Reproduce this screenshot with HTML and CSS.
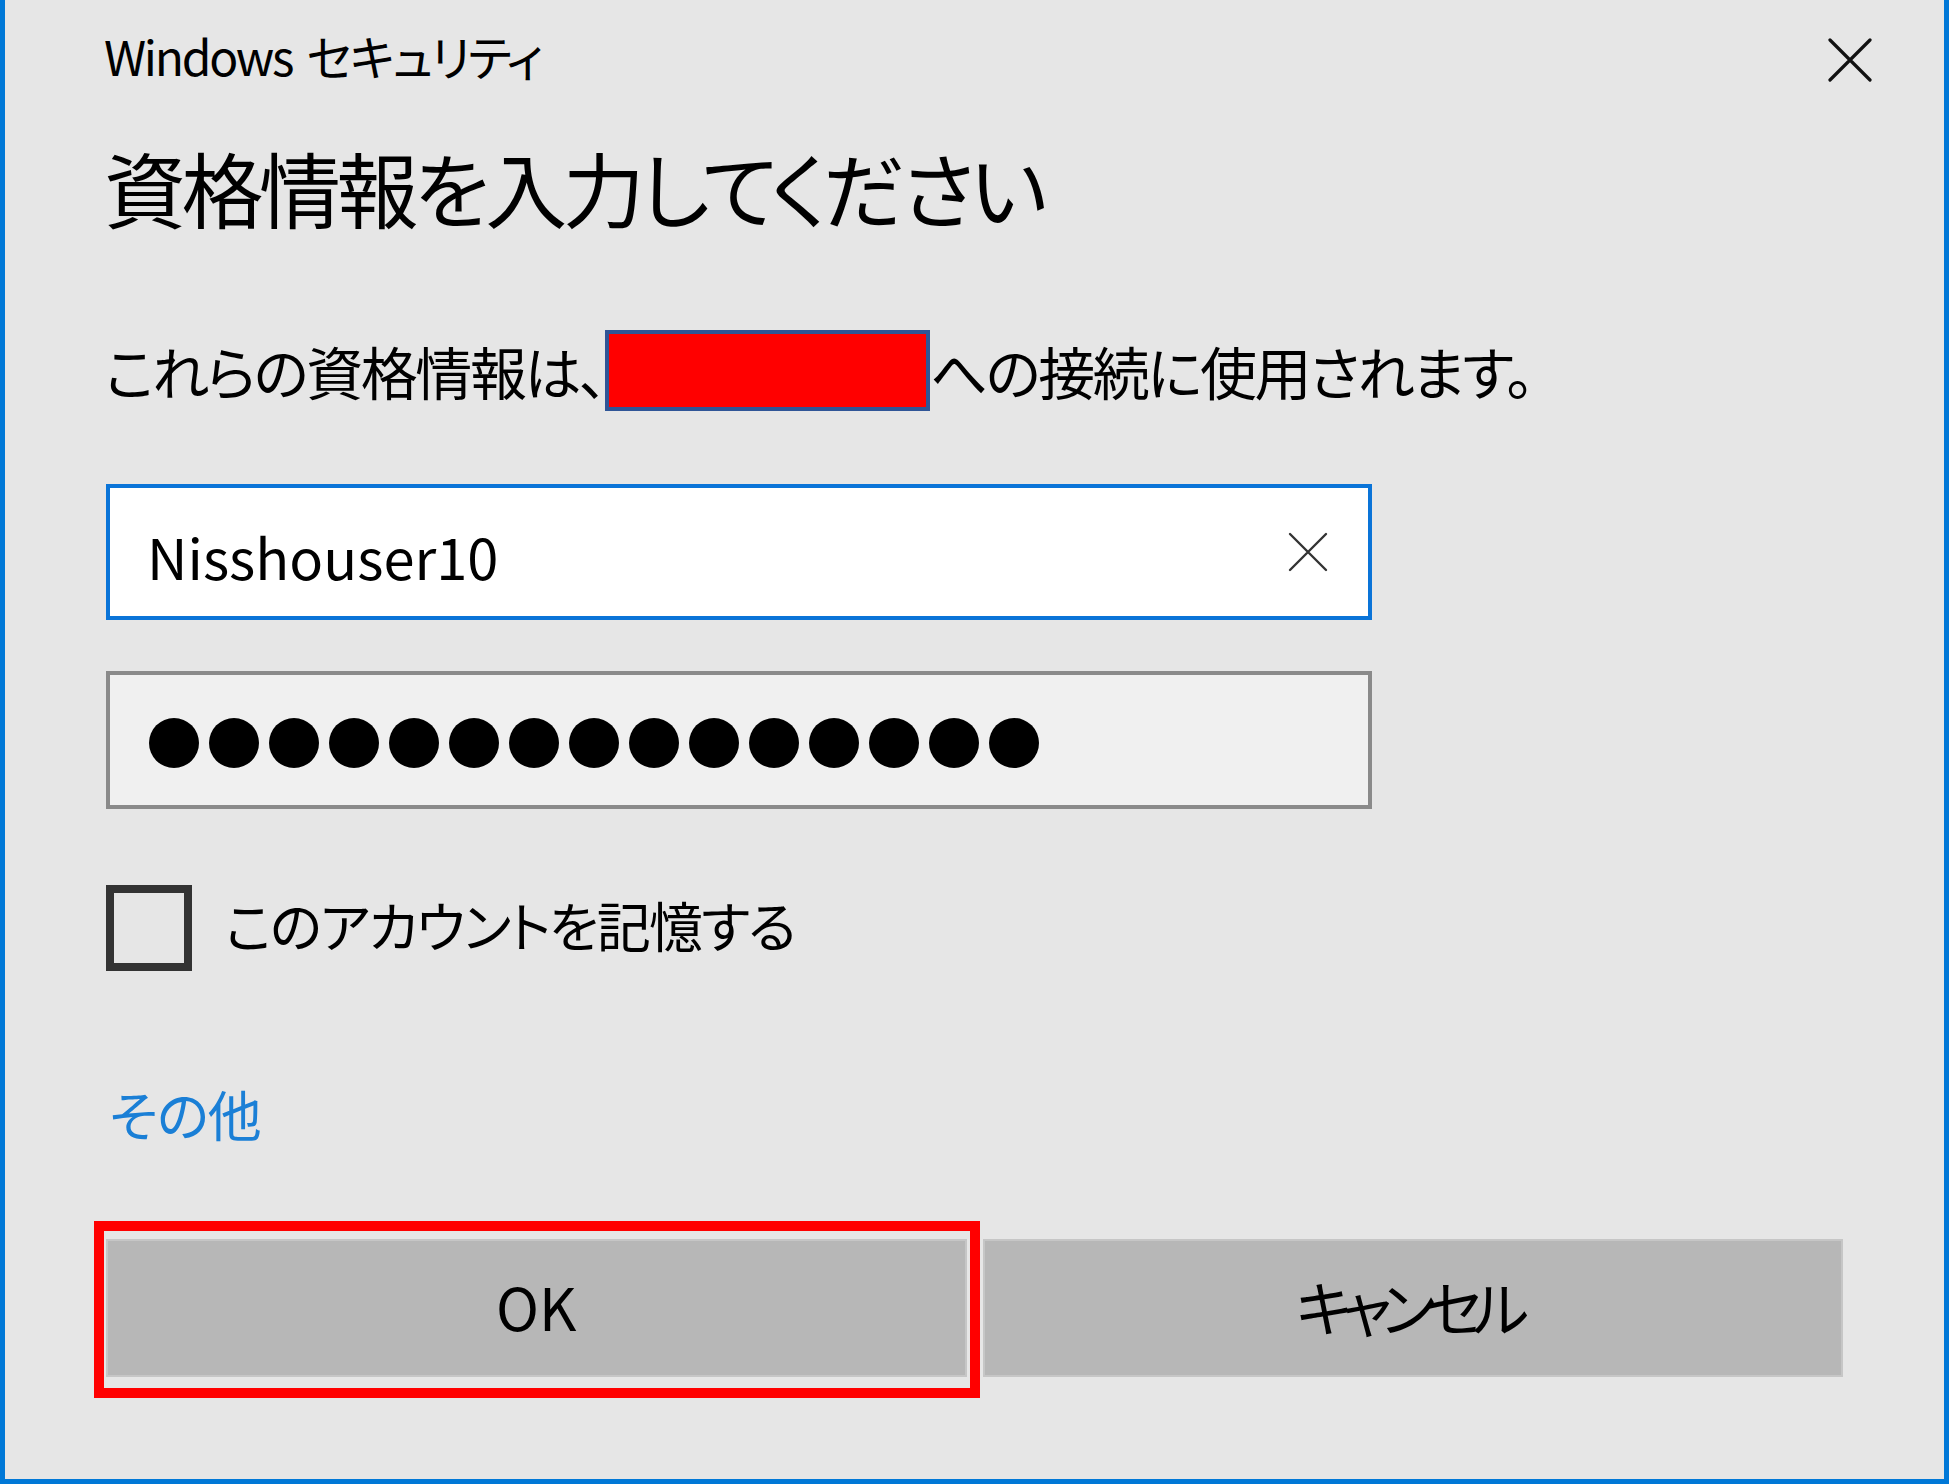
FILE: index.html
```html
<!DOCTYPE html>
<html lang="ja">
<head>
<meta charset="utf-8">
<title>Windows セキュリティ</title>
<link rel="stylesheet" href="styles.css">
</head>
<body>
<div class="dialog">
  <div class="header">
    <div class="app-title">Windows セキュリティ</div>
    <button class="close" aria-label="閉じる">
      <svg width="44" height="44" viewBox="0 0 44 44"><path d="M2 2 L42 42 M42 2 L2 42" stroke="#111" stroke-width="3.2" stroke-linecap="round" fill="none"/></svg>
    </button>
  </div>
  <h1 class="heading">資格情報を入力してください</h1>
  <div class="desc">
    <span class="desc-text">これらの資格情報は、</span>
    <span class="redact"></span>
    <span class="desc-text">への接続に使用されます。</span>
  </div>
  <div class="field field-user">
    <span class="field-value">Nisshouser10</span>
    <svg class="clear" width="40" height="40" viewBox="0 0 40 40"><path d="M2 2 L38 38 M38 2 L2 38" stroke="#333" stroke-width="2.4" stroke-linecap="round" fill="none"/></svg>
  </div>
  <div class="field field-pass">
    <div class="dots">
      <span class="dot"></span><span class="dot"></span><span class="dot"></span><span class="dot"></span><span class="dot"></span>
      <span class="dot"></span><span class="dot"></span><span class="dot"></span><span class="dot"></span><span class="dot"></span>
      <span class="dot"></span><span class="dot"></span><span class="dot"></span><span class="dot"></span><span class="dot"></span>
    </div>
  </div>
  <label class="remember">
    <span class="checkbox"></span>
    <span class="remember-text">このアカウントを記憶する</span>
  </label>
  <div class="more">その他</div>
  <div class="buttons">
    <div class="btn-wrap">
      <button class="btn">OK</button>
      <div class="highlight"></div>
    </div>
    <div class="btn-wrap">
      <button class="btn btn-cancel">キャンセル</button>
    </div>
  </div>
</div>
</body>
</html>
```
FILE: styles.css
```css
* { box-sizing: border-box; }
html, body {
  margin: 0;
  padding: 0;
  background: #e6e6e6;
}
body {
  font-family: "Noto Sans CJK JP", "Noto Sans", sans-serif;
  color: #000;
  font-feature-settings: "palt";
}
.dialog {
  width: 1949px;
  height: 1484px;
  background: #e6e6e6;
  border-left: 5px solid #0078d7;
  border-right: 5px solid #0078d7;
  border-bottom: 5px solid #0078d7;
  padding: 31px 101px 0 101px;
  display: flex;
  flex-direction: column;
}
.header {
  display: flex;
  justify-content: space-between;
  align-items: flex-start;
}
.app-title {
  font-size: 48px;
  line-height: 1;
  font-weight: 400;
  letter-spacing: -2.3px;
  word-spacing: 6px;
  margin-left: -2px;
}
.close {
  margin: 7px -29px 0 0;
  padding: 0;
  border: 0;
  background: transparent;
  width: 44px;
  height: 44px;
  display: block;
}
.close svg { display: block; }
.heading {
  margin: 64px 0 0 0;
  font-size: 82px;
  line-height: 1;
  font-weight: 400;
  letter-spacing: -4.5px;
  margin-left: -2px;
}
.desc {
  margin-top: 102px;
  display: flex;
  align-items: center;
  font-size: 57px;
  line-height: 1;
  letter-spacing: -2.4px;
  margin-left: -1px;
}
.redact {
  display: block;
  width: 325px;
  height: 81px;
  background: #ff0000;
  border: 4px solid #2f5597;
}
.field {
  width: 1266px;
  height: 136px;
  border: 4px solid #0a74d8;
  background: #fff;
  display: flex;
  align-items: center;
}
.field-user {
  margin-top: 73px;
  padding: 8px 40px 0 37px;
  justify-content: space-between;
}
.field-value {
  font-size: 56px;
  line-height: 1;
}
.clear {
  display: block;
  margin-top: -8px;
}
.field-pass {
  margin-top: 51px;
  height: 138px;
  border-color: #8a8a8a;
  background: #f0f0f0;
  padding: 6px 0 0 39px;
}
.dots {
  display: flex;
  gap: 10px;
}
.dot {
  width: 50px;
  height: 50px;
  border-radius: 50%;
  background: #000;
}
.remember {
  margin-top: 76px;
  display: flex;
  align-items: center;
  gap: 33px;
}
.checkbox {
  width: 86px;
  height: 86px;
  border: 8px solid #333;
  display: block;
}
.remember-text {
  font-size: 54px;
  line-height: 1;
  letter-spacing: -1.9px;
  margin-bottom: 6px;
}
.more {
  margin-top: 116px;
  font-size: 54px;
  line-height: 1;
  color: #1a7fd6;
  padding-left: 3px;
  letter-spacing: -1px;
}
.buttons {
  margin-top: 98px;
  display: flex;
  gap: 16px;
}
.btn-wrap {
  position: relative;
  flex: 1;
}
.btn {
  display: block;
  width: 100%;
  height: 138px;
  margin: 0;
  background: #b7b7b7;
  border: 2px solid #c6c6c6;
  font-family: inherit;
  font-feature-settings: "palt";
  font-size: 58px;
  line-height: 1;
  color: #000;
  padding: 0 0 4px 0;
}
.btn-cancel {
  font-size: 60px;
  letter-spacing: -9.7px;
  text-indent: -10px;
}
.highlight {
  position: absolute;
  left: -12px;
  top: -18px;
  right: -13px;
  bottom: -21px;
  border: 10px solid #ff0000;
  pointer-events: none;
}
```
